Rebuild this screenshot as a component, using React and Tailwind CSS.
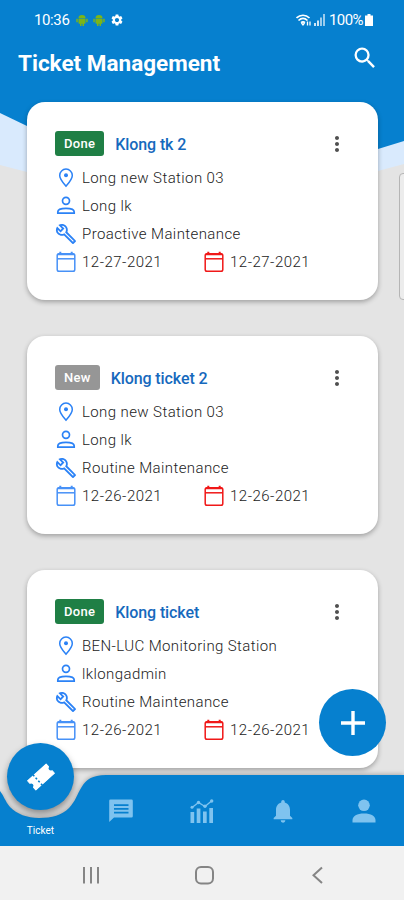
import { MdSearch, MdMoreVert, MdNotifications, MdSettings } from 'react-icons/md';

const tickets = [
  {
    status: 'Done',
    title: 'Klong tk 2',
    station: 'Long new Station 03',
    assignee: 'Long lk',
    type: 'Proactive Maintenance',
    startDate: '12-27-2021',
    dueDate: '12-27-2021',
  },
  {
    status: 'New',
    title: 'Klong ticket 2',
    station: 'Long new Station 03',
    assignee: 'Long lk',
    type: 'Routine Maintenance',
    startDate: '12-26-2021',
    dueDate: '12-26-2021',
  },
  {
    status: 'Done',
    title: 'Klong ticket',
    station: 'BEN-LUC Monitoring Station',
    assignee: 'lklongadmin',
    type: 'Routine Maintenance',
    startDate: '12-26-2021',
    dueDate: '12-26-2021',
  },
];

const AndroidIcon = () => (
  <svg className="w-3 h-3" viewBox="0 0 12 12" fill="#7cb518">
    <path d="M2.500 4a3.500 3 0 0 1 7 0ZM2.500 4.500h7v4.500a.8.8 0 0 1-.8.8H3.300a.8.8 0 0 1-.8-.8ZM.3 4.800h1.500v3.500H.3zM10.200 4.800h1.500v3.500h-1.500zM4 9h1.500v3H4zM6.500 9H8v3H6.500z" />
  </svg>
);

const PinIcon = () => (
  <svg className="w-5 h-5" viewBox="0 0 20 20" fill="none" stroke="#2b82f6" strokeWidth="1.500">
    <path d="M10 18.200C7 14.600 3.700 11 3.700 7.400a6.300 6.300 0 0 1 12.600 0c0 3.600-3.300 7.200-6.300 10.800Z" />
    <circle cx="10" cy="7.200" r="2" fill="#2b82f6" stroke="none" />
  </svg>
);

const PersonIcon = () => (
  <svg className="w-5 h-5" viewBox="0 0 20 20" fill="none" stroke="#2b82f6" strokeWidth="1.700">
    <circle cx="10" cy="4.800" r="3.500" />
    <path d="M1.800 17.200v-1.200c0-2.500 4.500-3.600 8.200-3.600s8.200 1.100 8.200 3.600v1.200Z" />
  </svg>
);

const WrenchIcon = () => (
  <svg className="w-[22px] h-[22px]" viewBox="0 0 24 24" fill="#2b82f6">
    <path d="m22.610 18.990-9.080-9.080c.93-2.340.45-5.100-1.440-7C9.790.610 6.210.4 3.660 2.260L7.500 6.110 6.080 7.520 2.250 3.690C.39 6.230.6 9.820 2.900 12.110c1.860 1.860 4.570 2.350 6.890 1.480l9.110 9.110c.39.39 1.020.39 1.410 0l2.300-2.300c.4-.38.4-1.010 0-1.410zm-3 1.600-9.460-9.460c-.61.45-1.290.72-2 .82-1.360.2-2.790-.21-3.830-1.250C3.370 9.760 2.930 8.500 3 7.260l3.090 3.090 4.240-4.240-3.090-3.090c1.240-.07 2.490.37 3.440 1.310 1.080 1.080 1.490 2.570 1.240 3.960-.12.71-.42 1.370-.88 1.960l9.450 9.450-.88.89z" />
  </svg>
);

const CalendarIcon = ({ color }) => (
  <svg className="w-5 h-[22px]" viewBox="0 0 20 22" fill="none" stroke={color} strokeWidth="1.500">
    <rect x="1.200" y="2.800" width="17.600" height="17.500" rx="1.800" />
    <path d="M1.200 7.800h17.600" />
    <path d="M1.800 3.200h16.400M4.300 0.800v2.500M15.700 0.800v2.500" strokeWidth="2" />
  </svg>
);

const MessageIcon = () => (
  <svg className="w-6 h-6" viewBox="0 0 24 24">
    <path d="M1.500 0.500h21a1.300 1.300 0 0 1 1.300 1.300v15.500a1.300 1.300 0 0 1-1.300 1.300H5L0.200 23V1.800A1.300 1.300 0 0 1 1.500 0.500Z" fill="currentColor" />
    <path d="M5 6.200h14.500M5 9.900h14.500M5 13.600h14.500" stroke="#0680cf" strokeWidth="1.700" />
  </svg>
);

const ChartIcon = () => (
  <svg className="w-[26px] h-[26px]" viewBox="0 0 26 26" fill="currentColor">
    <path d="M1.500 14h3.700v11H1.500zM7.700 10.500h3.700V25H7.700zM14 13.500h3.700V25H14zM20.300 10h3.700v15h-3.700z" />
    <path d="m3 9.500 6.500-5 6.500 4 6.500-5.500" fill="none" stroke="currentColor" strokeWidth="1.400" />
    <circle cx="3" cy="9.300" r="1.500" />
    <circle cx="9.500" cy="4.500" r="1.700" />
    <circle cx="16" cy="8.300" r="1.700" />
    <circle cx="22.700" cy="3" r="1.700" />
  </svg>
);

const UserIcon = () => (
  <svg className="w-6 h-6" viewBox="0 0 24 24" fill="currentColor">
    <circle cx="12" cy="6.300" r="5.800" />
    <path d="M0.500 23.500v-2.500c0-4 4.500-6.600 11.500-6.600s11.500 2.600 11.500 6.600v2.500Z" />
  </svg>
);

const TicketIcon = () => (
  <svg className="w-8 h-8" viewBox="0 0 32 32">
    <g transform="rotate(-42 16 16)">
      <path
        d="M3.500 9.800h25v3.500a2.800 2.800 0 0 0 0 5.400v3.500h-25v-3.500a2.800 2.800 0 0 0 0-5.400Z"
        fill="white"
        stroke="white"
        strokeLinejoin="round"
      />
      <path d="M11.500 9v14" stroke="#0680cf" strokeWidth="1.600" strokeDasharray="2 2" />
    </g>
  </svg>
);

const StatusBar = () => (
  <div className="h-10 pl-[34px] pr-[31px] flex items-center justify-between text-white text-[15px]">
    <div className="flex items-center">
      <span className="w-[42px] tracking-tight">10:36</span>
      <AndroidIcon />
      <span className="ml-[5px]">
        <AndroidIcon />
      </span>
      <MdSettings className="ml-[5px] w-[14px] h-[14px]" />
    </div>
    <div className="flex items-center">
      <svg className="w-4 h-[13px]" viewBox="0 0 16 13" fill="none" stroke="white" strokeWidth="1.700">
        <path d="M0.500 4C4.200.3 9.800.3 13.500 4M2.500 6.500c2.800-2.600 6.200-2.600 9 0M5 8.700c1.400-1.200 2.700-1.200 4 0" />
        <path d="m5.500 9 1.500 2 1.500-2M11.500 7.500v4M14 7.500v4" strokeWidth="1.300" />
      </svg>
      <svg className="ml-[2px] w-[11px] h-3" viewBox="0 0 11 12" fill="white">
        <path d="M0 9h2v3H0zM3 6.500h2V12H3z" opacity="0.800" />
        <path d="M6 3.500h2V12H6zM9 0h2v12H9z" opacity="0.600" />
      </svg>
      <span className="ml-[4px] w-[35px] tracking-[-0.6px]">100%</span>
      <svg className="ml-[1px] w-2 h-3" viewBox="0 0 8 12" fill="white">
        <path d="M2.500 0h3v1.500H8V12H0V1.500h2.500z" />
      </svg>
    </div>
  </div>
);

const InfoRow = ({ icon, children }) => (
  <div className="h-7 flex items-center">
    <span className="w-[22px] flex justify-center shrink-0">{icon}</span>
    <span className="ml-[5px] whitespace-nowrap">{children}</span>
  </div>
);

const TicketCard = ({ ticket }) => (
  <div className="h-[198px] pt-7 pl-7 pr-[29px] bg-white rounded-[18px] shadow-[0_2px_5px_rgba(0,0,0,0.3)]">
    <div className="h-[27px] flex items-center">
      <span
        className={`h-[25px] px-[9px] rounded-[3px] flex items-center text-white text-[13px] font-medium tracking-[0.300px] ${
          ticket.status === 'Done' ? 'bg-[#1f7f45]' : 'bg-[#969696]'
        }`}
      >
        {ticket.status}
      </span>
      <h2 className="ml-[11px] pt-0.5 text-base font-medium tracking-[-0.100px] text-[#1669bd]">{ticket.title}</h2>
      <MdMoreVert className="ml-auto w-6 h-6 text-[#505050]" />
    </div>

    <div className="mt-[7px] text-[15px] font-light tracking-[0.400px] text-[#222]">
      <InfoRow icon={<PinIcon />}>{ticket.station}</InfoRow>
      <InfoRow icon={<PersonIcon />}>{ticket.assignee}</InfoRow>
      <InfoRow icon={<WrenchIcon />}>{ticket.type}</InfoRow>
      <div className="flex">
        <div className="w-[148px] tracking-[0.500px]">
          <InfoRow icon={<CalendarIcon color="#4791f7" />}>{ticket.startDate}</InfoRow>
        </div>
        <div className="tracking-[0.500px]">
          <InfoRow icon={<CalendarIcon color="#f01818" />}>{ticket.dueDate}</InfoRow>
        </div>
      </div>
    </div>
  </div>
);

const BottomNav = () => (
  <nav className="absolute bottom-[54px] left-0 w-full h-[71px] text-[#7fc3ef]">
    <svg className="absolute inset-0 w-full h-full drop-shadow-[0_-1px_2px_rgba(0,0,0,0.25)]" viewBox="0 0 404 71">
      <path d="M0 16C4 21 5 26 10 32C17 39 27 43 39 43C52 43 62 40 69 33C82 20 78 0 106 0H404V71H0Z" fill="#0680cf" />
    </svg>
    <div className="relative h-full grid grid-cols-5">
      <div className="relative flex flex-col items-center justify-end pb-2">
        <button className="absolute -top-8 left-[7px] w-[67px] h-[67px] rounded-full bg-[#0680cf] flex items-center justify-center shadow-[0_4px_7px_rgba(0,0,0,0.4)]">
          <TicketIcon />
        </button>
        <span className="text-[10px] leading-[14px] text-white">Ticket</span>
      </div>
      <button className="flex items-center justify-center">
        <MessageIcon />
      </button>
      <button className="flex items-center justify-center">
        <ChartIcon />
      </button>
      <button className="flex items-center justify-center">
        <MdNotifications className="w-7 h-7" />
      </button>
      <button className="flex items-center justify-center">
        <UserIcon />
      </button>
    </div>
  </nav>
);

const SystemNav = () => (
  <div className="absolute bottom-0 left-0 w-full h-[54px] bg-[#f1f1f1]">
    <svg className="w-full h-full" viewBox="0 0 404 54" fill="none" stroke="#858585" strokeWidth="2">
      <path d="M84 21v16.500M91 21v16.500M98 21v16.500" />
      <rect x="196" y="21" width="17" height="16.500" rx="5" />
      <path d="m322 21.500-8.500 7.800 8.500 7.800" />
    </svg>
  </div>
);

const App = () => {
  return (
    <div className="relative w-[404px] h-[900px] overflow-hidden bg-[#e4e4e4] font-['Roboto',sans-serif]">
      {/* Header backdrop */}
      <svg className="absolute top-0 left-0 w-full h-[200px]" viewBox="0 0 404 200">
        <path d="M0 0H404V164L378 171L202 220L27 172L0 165Z" fill="#d9eafd" />
        <path d="M0 0H404V141L378 149L202 200L27 126L0 113Z" fill="#0680cf" />
      </svg>

      <div className="relative">
        <StatusBar />
        <header className="h-[62px] pl-[18px] pr-[25px] flex items-start justify-between text-white">
          <h1 className="pt-2 text-[22.500px] leading-[30px] font-bold">Ticket Management</h1>
          <MdSearch className="mt-1 w-7 h-7" />
        </header>

        <main className="pl-[27px] pr-[26px] flex flex-col gap-9">
          {tickets.map((ticket) => (
            <TicketCard key={ticket.title} ticket={ticket} />
          ))}
        </main>
      </div>

      {/* Edge of the next page */}
      <div className="absolute top-[173px] left-[399px] w-5 h-[127px] rounded border border-[#b5b5b5] bg-[#ececec]" />

      <BottomNav />
      <SystemNav />

      <button className="absolute top-[689px] left-[319px] w-[67px] h-[67px] rounded-full bg-[#0680cf] flex items-center justify-center">
        <svg className="w-6 h-6" viewBox="0 0 24 24" stroke="white" strokeWidth="3.400">
          <path d="M12 0v24M0 12h24" />
        </svg>
      </button>
    </div>
  );
};

export default App;
